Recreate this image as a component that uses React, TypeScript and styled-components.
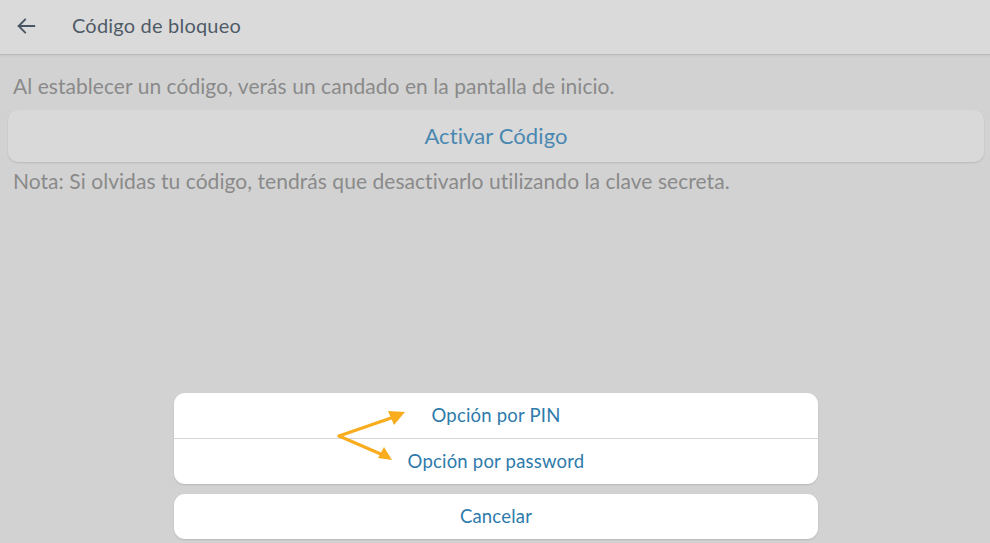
import React from "react";
import styled, { createGlobalStyle } from "styled-components";

const Global = createGlobalStyle`
  html, body { margin: 0; padding: 0; }
  body {
    width: 990px; height: 543px; overflow: hidden;
    background: #d2d2d2;
    font-family: Lato, "Open Sans", sans-serif;
  }
`;

const Page = styled.div`
  position: relative;
  width: 990px;
  height: 543px;
  background: #d2d2d2;
`;

const Header = styled.header`
  height: 54px;
  display: flex;
  align-items: center;
  background: #dadada;
  box-shadow: 0 1px 1px rgba(0, 0, 0, 0.08), 0 2px 2px rgba(0, 0, 0, 0.04);
  padding-left: 14px;
  box-sizing: border-box;
`;

const BackButton = styled.span`
  width: 24px;
  height: 24px;
  display: flex;
  align-items: center;
  justify-content: center;
  margin-top: -3px;
`;

const Title = styled.h1`
  margin: -4px 0 0 34px;
  font-size: 20px;
  font-weight: 400;
  color: #505b68;
  letter-spacing: 0.2px;
`;

const Content = styled.main`
  padding: 18px 6px 0 8px;
  display: flex;
  flex-direction: column;
`;

const Paragraph = styled.p`
  margin: 0 0 0 5px;
  font-size: 21px;
  line-height: 28px;
  color: #8a8a8a;
  letter-spacing: 0.05px;
`;

const WideButton = styled.div`
  margin: 10px 0 5px;
  height: 52px;
  border-radius: 10px;
  background: #d9d9d9;
  box-shadow: 0 1px 2px rgba(0, 0, 0, 0.12);
  display: flex;
  align-items: center;
  justify-content: center;
  font-size: 22px;
  color: #4a88b1;
  letter-spacing: 0.1px;
  padding-bottom: 2px;
  box-sizing: border-box;
`;

const Sheet = styled.div`
  position: absolute;
  left: 174px;
  top: 393px;
  width: 644px;
  display: flex;
  flex-direction: column;
  gap: 10px;
`;

const Group = styled.div`
  background: #ffffff;
  border-radius: 11px;
  box-shadow: 0 1px 2px rgba(0, 0, 0, 0.12);
  overflow: hidden;
`;

const Option = styled.div<{ $divider?: boolean }>`
  height: ${(p) => (p.$divider ? "46px" : "45px")};
  box-sizing: border-box;
  display: flex;
  align-items: center;
  justify-content: center;
  font-size: 18.5px;
  color: #2e7bab;
  letter-spacing: 0.2px;
  border-bottom: ${(p) => (p.$divider ? "1px solid #d6d6d6" : "none")};
  padding-bottom: 2px;
`;

const Arrows = styled.svg`
  position: absolute;
  left: 330px;
  top: 400px;
  pointer-events: none;
`;

export default function App() {
  return (
    <Page>
      <Global />
      <Header>
        <BackButton>
          <svg width="22" height="22" viewBox="0 0 24 24" fill="none">
            <path d="M21 12H4M11 5L4 12l7 7" stroke="#4a5563" strokeWidth="2" strokeLinecap="square" />
          </svg>
        </BackButton>
        <Title>Código de bloqueo</Title>
      </Header>
      <Content>
        <Paragraph>Al establecer un código, verás un candado en la pantalla de inicio.</Paragraph>
        <WideButton>Activar Código</WideButton>
        <Paragraph>Nota: Si olvidas tu código, tendrás que desactivarlo utilizando la clave secreta.</Paragraph>
      </Content>
      <Sheet>
        <Group>
          <Option $divider>Opción por PIN</Option>
          <Option>Opción por password</Option>
        </Group>
        <Group>
          <Option>Cancelar</Option>
        </Group>
      </Sheet>
      <Arrows width="90" height="70" viewBox="0 0 90 70">
        <g stroke="#f8ac1e" strokeWidth="3" strokeLinecap="round" fill="none">
          <path d="M9 36 L64 17" />
          <path d="M9 36 L53 55" />
        </g>
        <polygon points="75,12 58,11 64,25" fill="#f8ac1e" />
        <polygon points="62,60 54,47 48,58" fill="#f8ac1e" />
      </Arrows>
    </Page>
  );
}
